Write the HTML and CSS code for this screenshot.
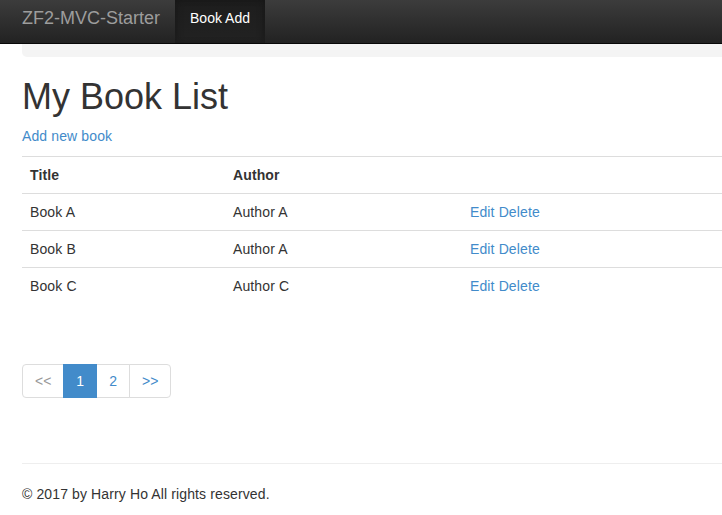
FILE: index.html
```html
<!DOCTYPE html>
<html>
<head>
<meta charset="utf-8">
<title>ZF2-MVC-Starter</title>
<link rel="stylesheet" href="styles.css">
</head>
<body>
<nav class="navbar">
  <a class="brand" href="#">ZF2-MVC-Starter</a>
  <ul class="nav">
    <li class="active"><a href="#">Book Add</a></li>
  </ul>
</nav>
<div class="container">
  <div class="topbar"></div>
  <h1 class="title">My Book List</h1>
  <p class="add"><a href="#">Add new book</a></p>
  <table class="table">
    <colgroup>
      <col class="c1"><col class="c2"><col>
    </colgroup>
    <thead>
      <tr><th>Title</th><th>Author</th><th></th></tr>
    </thead>
    <tbody>
      <tr><td>Book A</td><td>Author A</td><td><a href="#">Edit</a> <a href="#">Delete</a></td></tr>
      <tr><td>Book B</td><td>Author A</td><td><a href="#">Edit</a> <a href="#">Delete</a></td></tr>
      <tr><td>Book C</td><td>Author C</td><td><a href="#">Edit</a> <a href="#">Delete</a></td></tr>
    </tbody>
  </table>
  <ul class="pagination">
    <li class="disabled"><span>&lt;&lt;</span></li>
    <li class="current"><span>1</span></li>
    <li><a href="#">2</a></li>
    <li><a href="#">&gt;&gt;</a></li>
  </ul>
  <hr class="rule">
  <footer class="footer">
    <p>&copy; 2017 by Harry Ho All rights reserved.</p>
  </footer>
</div>
</body>
</html>
```
FILE: styles.css
```css
* { box-sizing: border-box; }
html, body { margin: 0; padding: 0; }
body {
  font-family: "Liberation Sans", Arial, sans-serif;
  font-size: 14px;
  line-height: 20px;
  color: #333;
  background: #fff;
  overflow: hidden;
}
a { color: #428bca; text-decoration: none; }

.navbar {
  display: flex;
  align-items: stretch;
  height: 44px;
  padding-left: 22px;
  background: linear-gradient(to bottom, #3c3c3c 0%, #222 100%);
  border-bottom: 1px solid #080808;
}
.brand {
  color: #9d9d9d;
  font-size: 18px;
  line-height: 20px;
  padding: 8px 15px 0 0;
}
.nav {
  display: flex;
  list-style: none;
  margin: 0;
  padding: 0;
}
.nav li a {
  display: block;
  height: 43px;
  padding: 8px 15px 0;
  line-height: 20px;
  color: #fff;
}
.nav li.active a {
  background: linear-gradient(to bottom, #1d1d1d 0%, #222 100%);
  box-shadow: inset 3px 0 6px rgba(0,0,0,0.15), inset -3px 0 6px rgba(0,0,0,0.15);
}

.container {
  padding-left: 22px;
  letter-spacing: 0.12px;
}
.topbar {
  height: 13px;
  background: #f4f4f4;
  border-bottom-left-radius: 5px;
}
.title {
  margin: 20px 0 9px;
  font-size: 36px;
  font-weight: 500;
  line-height: 39.6px;
  letter-spacing: 0;
}
.add {
  margin: 0 0 10px;
}
.table {
  width: 100%;
  border-collapse: collapse;
  border-spacing: 0;
  margin: 0;
}
.table col.c1 { width: 203px; }
.table col.c2 { width: 237px; }
.table th, .table td {
  padding: 8px;
  line-height: 20px;
  text-align: left;
  vertical-align: top;
  border-top: 1px solid #ddd;
}
.table thead th {
  font-weight: bold;
  border-bottom: 1px solid #ddd;
}
.table tbody tr:first-child td { border-top: 0; }

.pagination {
  display: flex;
  list-style: none;
  margin: 60px 0 0;
  padding: 0;
  letter-spacing: 0;
}
.pagination li > a, .pagination li > span {
  display: block;
  padding: 6px 12px;
  line-height: 20px;
  border: 1px solid #ddd;
  margin-left: -1px;
  color: #428bca;
  background: #fff;
}
.pagination li:first-child > span {
  margin-left: 0;
  border-radius: 4px 0 0 4px;
}
.pagination li:last-child > a { border-radius: 0 4px 4px 0; }
.pagination li.disabled > span { color: #999; }
.pagination li.current > span {
  background: #428bca;
  border-color: #428bca;
  color: #fff;
  position: relative;
}
.rule {
  margin: 65px 0 0;
  border: 0;
  border-top: 1px solid #eee;
}
.footer p {
  margin: 20px 0 10px;
}
```
